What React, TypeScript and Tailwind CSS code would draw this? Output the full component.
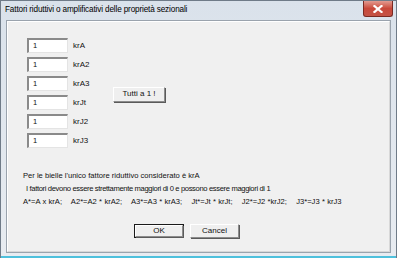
import React from "react";

const fields = ["krA", "krA2", "krA3", "krJt", "krJ2", "krJ3"];

function Field({ label }: { label: string }) {
  return (
    <div className="flex items-center h-[15px]">
      <div className="w-[41px] h-[15px] bg-white border-t-2 border-l-2 border-b border-r border-t-[#8a8a8a] border-l-[#8a8a8a] border-b-[#e4e4e4] border-r-[#e4e4e4] pl-[4px] leading-[11px] text-[7.5px]">
        1
      </div>
      <span className="ml-[5px] w-[40px] text-[8px]">{label}</span>
    </div>
  );
}

function WinButton({ children, def, className }: { children: React.ReactNode; def?: boolean; className?: string }) {
  return (
    <div className={(def ? "border border-[#1a1a1a] " : "") + "flex " + (className ?? "")}>
      <div className="flex-1 flex items-center justify-center bg-[#efefef] border border-t-white border-l-white border-b-[#8c8c8c] border-r-[#8c8c8c] text-[8px] shadow-[1px_1px_0_#5a5a5a]">
        <span>{children}</span>
      </div>
    </div>
  );
}

export default function App() {
  return (
    <div
      className="w-[397px] h-[258px] flex flex-col bg-gradient-to-b from-[#dae2eb] to-[#e8ecf1] border border-[#6f7b88] border-b-0 text-[#111]"
      style={{ fontFamily: "Tahoma, 'Liberation Sans', 'DejaVu Sans', sans-serif" }}
    >
      {/* Title bar */}
      <div className="h-[19px] flex items-start justify-between pl-[4px] pr-[3px]">
        <span className="mt-[3px] text-[8.2px] tracking-[-0.15px] text-black">Fattori riduttivi o amplificativi delle proprietà sezionali</span>
        <div className="w-[30px] h-[16px] rounded-b-[3px] bg-gradient-to-b from-[#e29a90] via-[#c9483a] to-[#c45446] border border-[#7a2a22] border-t-0 flex items-center justify-center">
          <svg width="10" height="8" viewBox="0 0 10 8">
            <path d="M1.5 1 L8.5 7 M8.5 1 L1.5 7" stroke="#fff" strokeWidth="2.2" strokeLinecap="square" />
          </svg>
        </div>
      </div>

      {/* Client area */}
      <div className="flex-1 mx-[5px] border border-[#9aa3ad] flex flex-col">
        <div className="flex-1 bg-[#f0f0f0] border border-white border-r-[#d8d8d8] border-b-[#d8d8d8] flex flex-col pl-[13px] pt-[16px]">
          <div className="flex items-center">
            <div className="flex flex-col gap-[4px] pl-[6px]">
              {fields.map((f) => (
                <Field key={f} label={f} />
              ))}
            </div>
            <WinButton className="w-[52px] h-[15px] mt-[2px]">Tutti a 1 !</WinButton>
          </div>

          <div className="mt-[21px] flex flex-col text-[7.6px] leading-[13px]">
            <span className="pl-[2px]">Per le bielle l'unico fattore riduttivo considerato è krA</span>
            <span className="pl-[5px] tracking-[-0.35px]">I fattori devono essere strettamente maggiori di 0 e possono essere maggiori di 1</span>
            <span className="pl-[2px] whitespace-pre [word-spacing:0.2px]">A*=A x krA;    A2*=A2 * krA2;    A3*=A3 * krA3;    Jt*=Jt * krJt;    J2*=J2 *krJ2;    J3*=J3 * krJ3</span>
          </div>

          <div className="mt-[16px] flex gap-[6px] pl-[113px]">
            <WinButton def className="w-[50px] h-[14px]">OK</WinButton>
            <WinButton className="w-[49px] h-[14px]">Cancel</WinButton>
          </div>
        </div>
      </div>
      <div className="h-[5px] border-b-2 border-b-[#4ec0dc]" />
    </div>
  );
}
